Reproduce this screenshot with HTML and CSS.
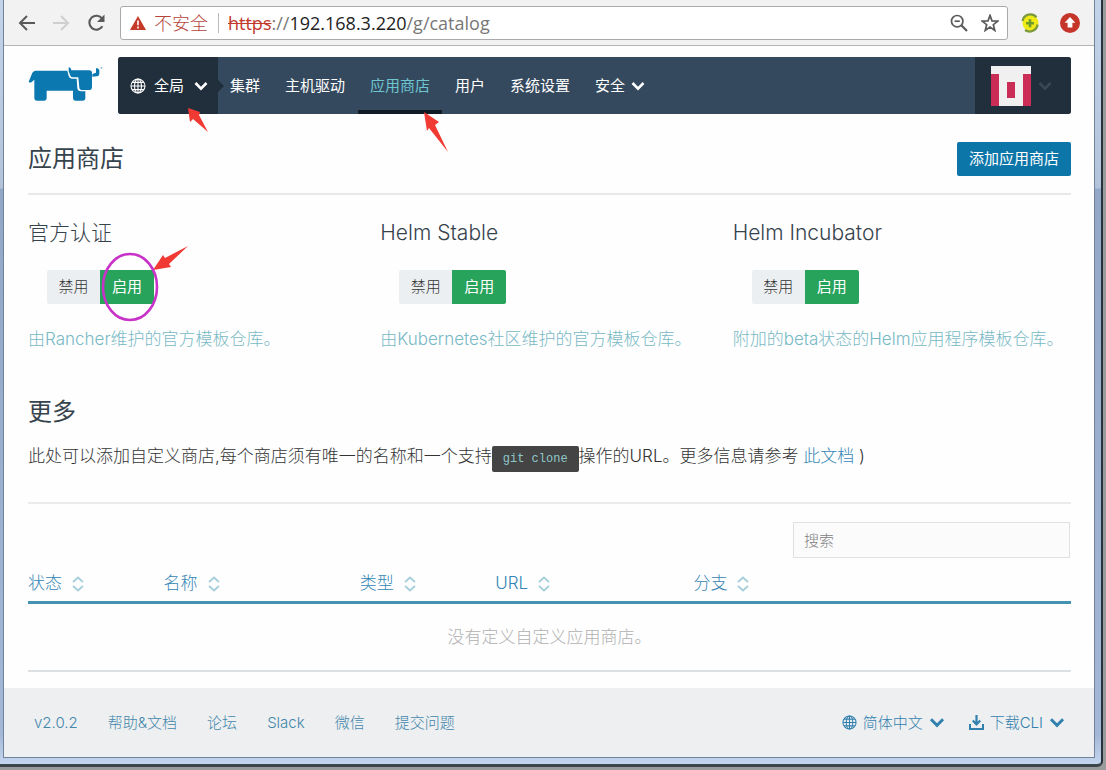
FILE: index.html
```html
<!DOCTYPE html>
<html lang="zh-CN">
<head>
<meta charset="utf-8">
<meta name="viewport" content="width=device-width, initial-scale=1">
<title>应用商店</title>
<link rel="stylesheet" href="styles.css">
</head>
<body>
<svg class="defs" aria-hidden="true">
  <symbol id="chevron" viewBox="0 0 14 10"><path d="M1.5 2 L7 7.6 L12.5 2" fill="none" stroke="currentColor" stroke-width="2.6"/></symbol>
  <symbol id="globe" viewBox="0 0 16 16"><g fill="none" stroke="currentColor" stroke-width="1.1"><circle cx="8" cy="8" r="7"/><ellipse cx="8" cy="8" rx="3.5" ry="7"/><path d="M8 1v14M1 8h14M2.2 4.4h11.6M2.2 11.6h11.6"/></g></symbol>
  <symbol id="sort" viewBox="0 0 12 16"><path d="M1 6 L6 1.5 L11 6 M1 10 L6 14.5 L11 10" fill="none" stroke="currentColor" stroke-width="1.8"/></symbol>
</svg>
<div class="frame">
  <div class="window">
    <div class="toolbar">
      <button class="tool back" aria-label="后退"><svg width="18" height="16" viewBox="0 0 18 16"><path d="M9 1 L2 8 L9 15 M2 8 H17" fill="none" stroke="currentColor" stroke-width="2"/></svg></button>
      <button class="tool forward" aria-label="前进"><svg width="18" height="16" viewBox="0 0 18 16"><path d="M9 1 L16 8 L9 15 M16 8 H1" fill="none" stroke="currentColor" stroke-width="2"/></svg></button>
      <button class="tool reload" aria-label="刷新"><svg width="20" height="18" viewBox="0 0 20 18"><path d="M16.4 12.3 A7 7 0 1 1 16.2 4.8" fill="none" stroke="currentColor" stroke-width="2.1"/><path d="M18.5 0.5 V8 H11 Z" fill="currentColor"/></svg></button>
      <div class="address">
        <svg class="warn" width="16" height="14" viewBox="0 0 16 14"><path d="M8 0 L16 14 H0 Z" fill="#c53929"/><path d="M8 4.6v4.6M8 10.6v1.8" stroke="#fff" stroke-width="1.6"/></svg>
        <span class="insecure">不安全</span>
        <span class="url"><s>https</s><span class="dim">://</span>192.168.3.220<span class="dim">/g/catalog</span></span>
        <button class="tool" aria-label="缩小"><svg width="18" height="18" viewBox="0 0 18 18"><g fill="none" stroke="currentColor" stroke-width="1.7"><circle cx="7.2" cy="7.2" r="5.7"/><path d="M4.6 7.2h5.2"/><path d="M11.3 11.3 L17 17" stroke-width="2.2"/></g></svg></button>
        <button class="tool" aria-label="收藏"><svg width="18" height="18" viewBox="0 0 18 18"><path d="M9 1.4 L11 6.9 L16.8 7.1 L12.3 10.7 L13.8 16.4 L9 13.1 L4.2 16.4 L5.7 10.7 L1.2 7.1 L7 6.9 Z" fill="none" stroke="currentColor" stroke-width="1.7"/></svg></button>
      </div>
      <button class="tool ext" aria-label="扩展"><svg width="20" height="20" viewBox="0 0 20 20"><circle cx="10.5" cy="10" r="8" fill="#f0ea17"/><path d="M2.5 8 A8 8 0 0 1 16.5 4.2 M17.6 11.5 A8 8 0 0 1 5 17" fill="none" stroke="#7c9a3c" stroke-width="2.2"/><path d="M10 6.2v8M6 10.2h8" stroke="#6d9c2a" stroke-width="2.6"/></svg></button>
      <button class="tool ext" aria-label="更新"><svg width="20" height="20" viewBox="0 0 20 20"><circle cx="10" cy="10" r="10" fill="#c6352a"/><path d="M10 4 L15.4 9.8 H12.4 V14.6 H7.6 V9.8 H4.6 Z" fill="#fff"/></svg></button>
    </div>

    <div class="page">
      <header class="top">
        <a class="logo" href="#" aria-label="Rancher"><svg width="76" height="36" viewBox="0 0 228 108"><path d="M20 14 H118 L122 30 Q124 38 132 38 H146 L148 66 Q149 76 159 76 H172 V97 Q172 104 164 104 H142 Q135 104 135 97 V74 H56 V97 Q56 104 49 104 H26 Q19 104 19 97 V41 L11 48 Q5 52 2 47 L13 20 Z" fill="#0b79b0"/><path d="M122 4 Q128 4 129 9 L130 13 H184 Q192 13 192 21 V62 Q192 72 183 72 H164 Q155 72 154 65 L151 34 H135 Q129 34 127 29 L122 16 Z" fill="#0b79b0"/><path d="M193 24 L204 20 V9 Q205 4 209 7 L214 12 V22 Q214 31 207 31 L193 32 Z" fill="#0b79b0"/><path d="M218 5 h5 M220 3 v6" stroke="#8fb8d2" stroke-width="3"/></svg></a>
        <nav class="nav">
          <button class="scope"><svg width="16" height="16"><use href="#globe"/></svg><span>全局</span><svg class="chev" width="14" height="10"><use href="#chevron"/></svg></button>
          <div class="links">
            <a href="#">集群</a>
            <a href="#">主机驱动</a>
            <a href="#" class="active" aria-current="page">应用商店</a>
            <a href="#">用户</a>
            <a href="#">系统设置</a>
            <a href="#">安全<svg width="14" height="10"><use href="#chevron"/></svg></a>
          </div>
          <button class="user" aria-label="用户菜单"><svg width="40" height="40" viewBox="0 0 40 40"><path d="M0 0h40v40H0z" fill="#f0f0f0"/><path d="M0 8h8v32H0zM32 8h8v32h-8zM16 16h8v16h-8z" fill="#cb2d57"/></svg><svg class="chev" width="14" height="10"><use href="#chevron"/></svg></button>
        </nav>
      </header>

      <main>
        <div class="title-row">
          <h1>应用商店</h1>
          <button class="primary">添加应用商店</button>
        </div>

        <section class="catalogs">
          <article>
            <h2>官方认证</h2>
            <div class="toggle" role="group" aria-label="官方认证"><button>禁用</button><button class="on" aria-pressed="true">启用</button></div>
            <p>由Rancher维护的官方模板仓库。</p>
          </article>
          <article>
            <h2>Helm Stable</h2>
            <div class="toggle" role="group" aria-label="Helm Stable"><button>禁用</button><button class="on" aria-pressed="true">启用</button></div>
            <p>由Kubernetes社区维护的官方模板仓库。</p>
          </article>
          <article>
            <h2>Helm Incubator</h2>
            <div class="toggle" role="group" aria-label="Helm Incubator"><button>禁用</button><button class="on" aria-pressed="true">启用</button></div>
            <p>附加的beta状态的Helm应用程序模板仓库。</p>
          </article>
        </section>

        <section class="more">
          <h1>更多</h1>
          <p>此处可以添加自定义商店,每个商店须有唯一的名称和一个支持<code>git clone</code>操作的URL。更多信息请参考 <a href="#">此文档</a> )</p>
        </section>

        <section class="custom">
          <input class="search" type="search" placeholder="搜索" aria-label="搜索">
          <table>
            <thead>
              <tr>
                <th class="c-state">状态<svg width="12" height="16"><use href="#sort"/></svg></th>
                <th class="c-name">名称<svg width="12" height="16"><use href="#sort"/></svg></th>
                <th class="c-kind">类型<svg width="12" height="16"><use href="#sort"/></svg></th>
                <th class="c-url">URL<svg width="12" height="16"><use href="#sort"/></svg></th>
                <th>分支<svg width="12" height="16"><use href="#sort"/></svg></th>
              </tr>
            </thead>
            <tbody>
              <tr><td colspan="5">没有定义自定义应用商店。</td></tr>
            </tbody>
          </table>
        </section>
      </main>
    </div>

    <footer class="footer">
      <a href="#">v2.0.2</a>
      <a href="#">帮助&amp;文档</a>
      <a href="#">论坛</a>
      <a href="#">Slack</a>
      <a href="#">微信</a>
      <a href="#">提交问题</a>
      <div class="menus">
        <button><svg width="15" height="15"><use href="#globe"/></svg>简体中文<svg width="16" height="11"><use href="#chevron"/></svg></button>
        <button><svg width="15" height="15" viewBox="0 0 15 15"><path d="M1 9v5h13V9" fill="none" stroke="currentColor" stroke-width="2"/><path d="M7.5 0v8M3.8 5.5 L7.5 9.5 L11.2 5.5" fill="none" stroke="currentColor" stroke-width="2.2"/></svg>下载CLI<svg width="16" height="11"><use href="#chevron"/></svg></button>
      </div>
    </footer>
  </div>
</div>

<svg class="marks" width="460" height="330" viewBox="0 0 460 330" aria-hidden="true">
  <g fill="#f23a35">
    <path d="M188 108 L200 112 L199 115 L208 132 L193 119 L190 122 Z"/>
    <path d="M424 112 L439 122 L435 125 L448 152 L429 128 L427 131 Z"/>
    <path d="M153 270 L163 255 L165 258 L188 246 L169 264 L171 267 Z"/>
  </g>
  <ellipse cx="130" cy="287" rx="27" ry="33" fill="none" stroke="#c832c8" stroke-width="2.6"/>
</svg>
</body>
</html>
```
FILE: styles.css
```css
* { box-sizing: border-box; }

body {
  margin: 0;
  padding: 0 3px 3px 0;
  background: #9a9b9d;
  font-family: Inter, "Noto Sans CJK SC", sans-serif;
  font-weight: 300;
  font-size: 17px;
  line-height: 26px;
  color: #36434d;
}

h1, h2, p { margin: 0; font-weight: 300; }
a { color: #3586b5; text-decoration: none; }
button { border: 0; padding: 0; background: none; font: inherit; color: inherit; }
svg { flex: none; }
.defs { position: absolute; width: 0; height: 0; }

.frame {
  display: flex;
  min-height: calc(100vh - 3px);
  padding: 0 6px 6px 3px;
  border-right: 2px solid #27323c;
  border-bottom: 3px solid #3b464a;
  border-bottom-right-radius: 6px;
  background: linear-gradient(#c3d3e8 0, #b3c3da 188px, #93a8c6 189px, #a3b7d6 96%, #c4d6ee 100%);
}

.window {
  flex: 1;
  display: flex;
  flex-direction: column;
  min-width: 0;
  border: solid #71839c;
  border-width: 0 1px 1px;
  background: #fefefe;
}

/* Browser toolbar */
.toolbar {
  display: flex;
  align-items: center;
  gap: 16px;
  height: 46px;
  padding: 0 14px;
  border-bottom: 1px solid #b5b5b5;
  background: #f2f2f2;
  color: #5a5a5a;
}
.tool { display: flex; }
.forward { color: #cfcfcf; }
.ext + .ext { margin-left: 4px; }
.address {
  flex: 1;
  display: flex;
  align-items: center;
  gap: 13px;
  height: 34px;
  margin-left: -2px;
  margin-right: -4px;
  padding: 0 8px 0 9px;
  border: 1px solid #aaa;
  border-radius: 3px;
  background: #fff;
  font-family: "Open Sans", "Noto Sans CJK SC", sans-serif;
  font-weight: 400;
  font-size: 18px;
}
.warn { margin-right: -5px; }
.insecure { padding-right: 10px; border-right: 1px solid #bbb; line-height: 20px; color: #b5443b; font-weight: 300; }
.url { flex: 1; margin-left: -4px; color: #222; }
.url s { color: #c0392b; }
.dim { color: #777; }

/* Site header */
.page { padding: 11px 23px 0 24px; }
.top { display: flex; }
.logo { width: 90px; padding-top: 9px; }
.nav {
  flex: 1;
  display: flex;
  height: 57px;
  border-radius: 3px;
  overflow: hidden;
  background: #34495e;
  color: #fff;
  font-size: 15px;
  font-weight: 400;
}
.scope {
  display: flex;
  align-items: center;
  gap: 8px;
  width: 100px;
  padding-left: 12px;
  background: #212f3d;
}
.scope .chev { margin-left: 2px; }
.links { flex: 1; display: flex; gap: 1px; }
.links::before {
  content: "";
  align-self: center;
  width: 0;
  margin-right: -7px;
  border: solid transparent;
  border-width: 6px 0 6px 6px;
  border-left-color: #212f3d;
}
.links a {
  display: flex;
  align-items: center;
  gap: 6px;
  padding: 4px 12px 0;
  border-bottom: 4px solid transparent;
  color: #fff;
}
.links .active { border-color: #111b26; color: #6cc5cf; }
.user {
  display: flex;
  align-items: center;
  gap: 7px;
  width: 96px;
  padding-left: 16px;
  background: #212f3d;
  color: #3b4854;
}

/* Content */
h1 { font-size: 24px; line-height: 32px; font-weight: 400; }
.title-row {
  display: flex;
  align-items: center;
  justify-content: space-between;
  margin-top: 28px;
  padding-bottom: 17px;
  border-bottom: 2px solid #e6e8ea;
}
.primary {
  height: 34px;
  padding: 0 12px;
  border-radius: 2px;
  background: #0c76a9;
  color: #fff;
  font-size: 15px;
  font-weight: 400;
}
.catalogs { display: grid; grid-template-columns: repeat(3, 1fr); gap: 14px; margin-top: 24px; }
h2 { font-size: 21px; line-height: 28px; }
.toggle { display: flex; margin: 23px 0 22px 19px; font-size: 15px; }
.toggle button { width: 53px; height: 34px; border-radius: 2px 0 0 2px; background: #eceff1; color: #333; }
.toggle .on { width: 54px; border-radius: 0 2px 2px 0; background: #27a35b; color: #fff; font-weight: 400; }
.catalogs p { color: #78b9c5; white-space: nowrap; }

.more { margin-top: 44px; padding-bottom: 33px; border-bottom: 2px solid #e9ebec; }
.more p { margin-top: 15px; color: #333; }
code {
  padding: 6px 11px;
  border-radius: 2px;
  background: #444;
  color: #8fc7c9;
  font: 12px "Liberation Mono", monospace;
}

.custom { display: flex; flex-direction: column; margin-top: 18px; }
.search {
  align-self: flex-end;
  width: 277px;
  height: 36px;
  margin-right: 1px;
  padding: 0 10px;
  border: 1px solid #dfe1e3;
  border-radius: 0;
  background: #fbfbfb;
  font: inherit;
  font-size: 15px;
}
.search::placeholder { color: #808080; }
table { width: 100%; border-collapse: collapse; table-layout: fixed; }
th {
  padding: 13px 0 6px;
  border-bottom: 3px solid #4493b3;
  font-weight: 300;
  line-height: 24px;
  text-align: left;
  color: #3586b5;
}
th svg { margin-left: 10px; vertical-align: -3px; color: #a5cfdb; }
.c-state, .c-kind { width: 13%; }
.c-name { width: 18.8%; }
.c-url { width: 19%; }
td { padding: 20px 0; border-bottom: 2px solid #dde0e2; text-align: center; color: #b0b0b0; }

.footer {
  flex: 1;
  display: flex;
  align-items: center;
  gap: 30px;
  min-height: 68px;
  margin-top: 16px;
  padding: 0 29px 0 30px;
  background: #edeff0;
  color: #3280ae;
  font-size: 15px;
}
.footer a { color: #4386ac; }
.menus { display: flex; gap: 24px; margin-left: auto; }
.menus button { display: flex; align-items: center; gap: 6px; }

/* Hand-drawn annotations over the page */
.marks { position: absolute; top: 0; left: 0; pointer-events: none; }
```
